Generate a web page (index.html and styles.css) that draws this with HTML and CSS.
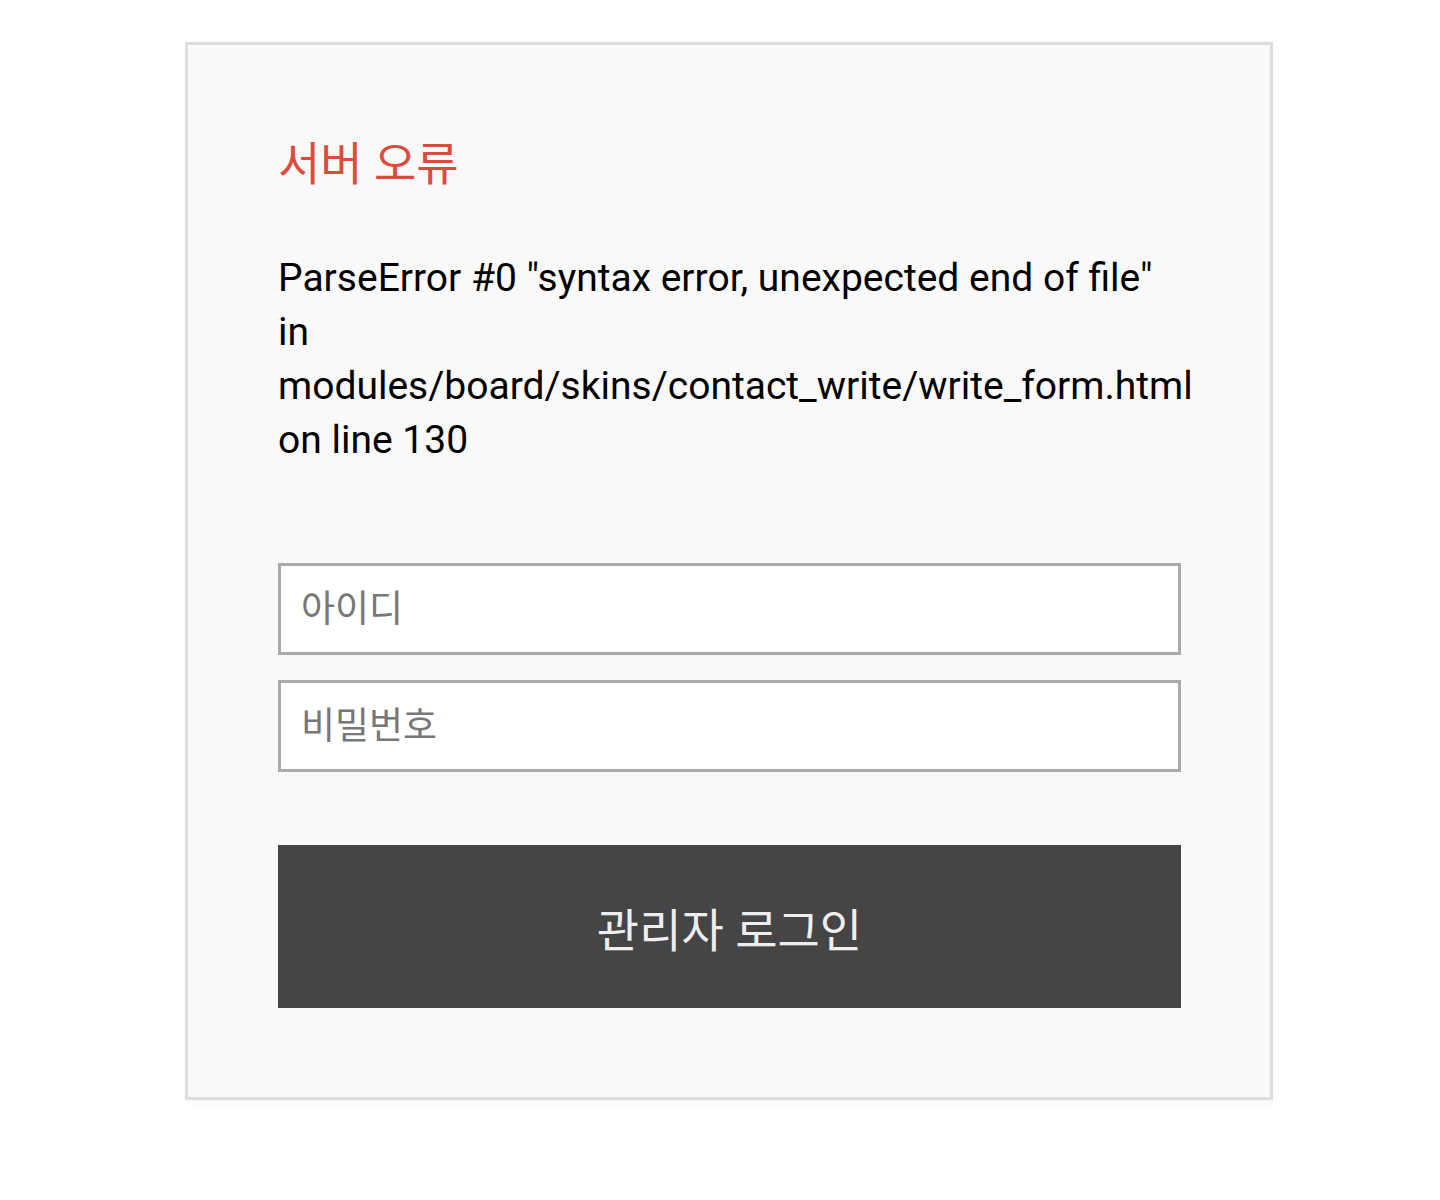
FILE: index.html
```html
<!DOCTYPE html>
<html lang="ko">
<head>
  <meta charset="UTF-8">
  <meta name="viewport" content="width=device-width, initial-scale=1.0">
  <title>서버 오류</title>
<link rel="stylesheet" href="styles.css">
</head>
<body>

  <div class="page">
    <div class="error-box">
      <h1 class="error-title">서버 오류</h1>
      <p class="error-message">ParseError #0 "syntax error, unexpected end of file" in modules/board/skins/contact_write/write_form.html on line 130</p>

      <form class="login-form" onsubmit="return false;">
        <input type="text" class="login-input" placeholder="아이디" autocomplete="off"/>
        <input type="password" class="login-input" placeholder="비밀번호" autocomplete="off"/>
        <button type="submit" class="login-button">관리자 로그인</button>
      </form>
    </div>
  </div>

</body>
</html>
```

FILE: styles.css
```css
body {
  margin: 0;
  padding: 0;
  background: #fff;
  color: #000;
  font-family: Roboto, "Noto Sans CJK KR", sans-serif;
}

.page {
  padding: 42px 0 60px 185px;
}

.error-box {
  width: 1088px;
  box-sizing: border-box;
  padding: 91px 89px 89px 90px;
  background: #f9f9f9;
  border: 3px solid #ddd;
  box-shadow: 2px 3px 6px rgba(0, 0, 0, 0.04);
}

.error-title {
  margin: 0;
  font-size: 46px;
  font-weight: 400;
  line-height: 57px;
  color: #dd4b3e;
}

.error-message {
  margin: 58px 0 0;
  font-size: 39px;
  line-height: 54px;
}

.login-form {
  display: flex;
  flex-direction: column;
  gap: 25px;
  margin-top: 96px;
}

.login-input {
  height: 92px;
  box-sizing: border-box;
  margin: 0;
  padding: 0 20px;
  border: 3px solid #aaa;
  border-radius: 0;
  background: #fff;
  font-family: Roboto, "Noto Sans CJK KR", sans-serif;
  font-size: 37px;
  color: #333;
  outline: none;
}

.login-input::placeholder {
  color: #777;
}

.login-button {
  height: 163px;
  margin-top: 48px;
  border: none;
  border-radius: 0;
  background: #454545;
  color: #eee;
  font-family: Roboto, "Noto Sans CJK KR", sans-serif;
  font-size: 46px;
  cursor: pointer;
}
```
